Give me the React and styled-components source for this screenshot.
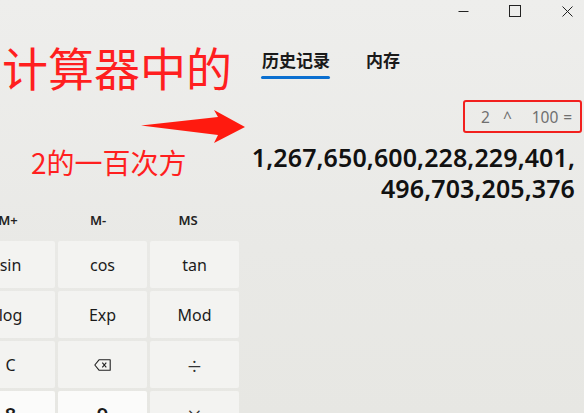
import React from "react";
import styled, { createGlobalStyle } from "styled-components";

const Global = createGlobalStyle`
  html, body { margin: 0; padding: 0; }
  body { font-family: "Noto Sans", "Noto Sans CJK SC", sans-serif; }
`;

const Page = styled.div`
  position: relative;
  width: 584px;
  height: 413px;
  overflow: hidden;
  display: flex;
  flex-direction: column;
  background: linear-gradient(180deg, #eeeeec 0%, #e9e9e6 60%, #e7e7e3 100%);
`;

const TitleBar = styled.div`
  height: 22px;
  display: flex;
  justify-content: flex-end;
  margin-right: -9px;
  flex-shrink: 0;
`;

const WinButton = styled.div`
  width: 52px;
  height: 22px;
  display: flex;
  align-items: center;
  justify-content: center;
  color: #222;
`;

const Body = styled.div`
  flex: 1;
  display: flex;
  min-height: 0;
`;

const CalcPane = styled.div`
  width: 240px;
  flex-shrink: 0;
  padding-top: 183px;
`;

const MemoryRow = styled.div`
  display: grid;
  grid-template-columns: repeat(3, 90px);
  margin-left: -37px;
  height: 30px;
  margin-bottom: 6px;
`;

const MemKey = styled.div`
  display: flex;
  align-items: center;
  justify-content: center;
  font-size: 13px;
  font-weight: 600;
  color: #222;
`;

const KeyGrid = styled.div`
  display: grid;
  grid-template-columns: repeat(3, 89px);
  grid-auto-rows: 47px;
  gap: 3px;
  margin-left: -34px;
`;

const Key = styled.div`
  display: flex;
  align-items: center;
  justify-content: center;
  background: ${(p) => (p.$num ? "#fbfbfa" : "#f3f3f1")};
  border-radius: 2px;
  font-size: ${(p) => (p.$num ? "20px" : p.$big ? "25px" : "16px")};
  font-weight: ${(p) => (p.$num ? 600 : p.$big ? 300 : 400)};
  color: ${(p) => (p.$big ? "#333" : "#1b1b1b")};
`;

const HistoryPane = styled.div`
  flex: 1;
  display: flex;
  flex-direction: column;
`;

const Tabs = styled.div`
  display: flex;
  gap: 36px;
  padding-left: 22px;
  margin-top: 26px;
`;

const Tab = styled.div`
  display: flex;
  flex-direction: column;
  font-family: "Noto Sans CJK SC", sans-serif;
  font-size: 17px;
  font-weight: 700;
  line-height: 24px;
  color: #1a1a1a;
  &::after {
    content: "";
    display: block;
    height: 3px;
    margin-top: 4px;
    margin-left: -1px;
    border-radius: 2px;
    background: ${(p) => (p.$active ? "#0a6fd0" : "transparent")};
  }
`;

const ExprRow = styled.div`
  display: flex;
  justify-content: flex-end;
  padding-right: 2px;
  margin-top: 21px;
`;

const ExprBox = styled.div`
  width: 119px;
  height: 33px;
  box-sizing: border-box;
  border: 2px solid #f2201e;
  border-radius: 3px;
  display: flex;
  align-items: center;
  padding-left: 16px;
  font-size: 15.5px;
  color: #6f6f6f;
`;

const ExprPart = styled.span`
  margin-left: ${(p) => p.$gap || 0}px;
`;

const Result = styled.div`
  margin-top: 9px;
  padding-right: 9px;
  text-align: right;
  font-size: 25px;
  font-weight: 600;
  line-height: 31px;
  color: #111;
  letter-spacing: 0.1px;
`;

const AnnoText = styled.div`
  position: absolute;
  left: ${(p) => p.$x}px;
  top: ${(p) => p.$y}px;
  font-family: "Noto Sans CJK SC", sans-serif;
  font-size: ${(p) => p.$size}px;
  font-weight: 400;
  line-height: 1;
  color: #ff1f1f;
  white-space: nowrap;
`;

const Arrow = styled.svg`
  position: absolute;
  left: 138px;
  top: 106px;
`;

const keys = [
  { t: "sin" }, { t: "cos" }, { t: "tan" },
  { t: "log" }, { t: "Exp" }, { t: "Mod" },
  { t: "C" }, { t: "back" }, { t: "÷", big: true },
  { t: "8", num: true }, { t: "9", num: true }, { t: "×", big: true },
];

const BackIcon = () => (
  <svg width="17" height="12" viewBox="0 0 17 12" fill="none" stroke="#222" strokeWidth="1.1">
    <path d="M5 0.8 H16.2 V11.2 H5 L0.8 6 Z" strokeLinejoin="round" />
    <path d="M8.3 3.6 L12.3 8.4 M12.3 3.6 L8.3 8.4" />
  </svg>
);

export default function App() {
  return (
    <>
      <Global />
      <Page>
        <TitleBar>
          <WinButton>
            <svg width="11" height="11" viewBox="0 0 11 11">
              <path d="M0.5 5.5 H10.5" stroke="#222" strokeWidth="1" />
            </svg>
          </WinButton>
          <WinButton>
            <svg width="12" height="12" viewBox="0 0 12 12">
              <rect x="0.5" y="0.5" width="11" height="11" fill="none" stroke="#222" strokeWidth="1" />
            </svg>
          </WinButton>
          <WinButton>
            <svg width="11" height="11" viewBox="0 0 11 11">
              <path d="M0.5 0.5 L10.5 10.5 M10.5 0.5 L0.5 10.5" stroke="#222" strokeWidth="1" />
            </svg>
          </WinButton>
        </TitleBar>
        <Body>
          <CalcPane>
            <MemoryRow>
              <MemKey>M+</MemKey>
              <MemKey>M-</MemKey>
              <MemKey>MS</MemKey>
            </MemoryRow>
            <KeyGrid>
              {keys.map((k, i) => (
                <Key key={i} $num={k.num} $big={k.big}>
                  {k.t === "back" ? <BackIcon /> : k.t}
                </Key>
              ))}
            </KeyGrid>
          </CalcPane>
          <HistoryPane>
            <Tabs>
              <Tab $active>历史记录</Tab>
              <Tab>内存</Tab>
            </Tabs>
            <ExprRow>
              <ExprBox>
                <ExprPart>2</ExprPart>
                <ExprPart $gap={13}>^</ExprPart>
                <ExprPart $gap={20}>100</ExprPart>
                <ExprPart $gap={5}>=</ExprPart>
              </ExprBox>
            </ExprRow>
            <Result>
              <div>1,267,650,600,228,229,401,</div>
              <div>496,703,205,376</div>
            </Result>
          </HistoryPane>
        </Body>
        <AnnoText $x={2} $y={43} $size={46}>计算器中的</AnnoText>
        <AnnoText $x={31} $y={148} $size={28}>2的一百次方</AnnoText>
        <Arrow width="110" height="40" viewBox="0 0 110 40">
          <polygon points="3,19.5 80,11 76,4 107,21 76,37 80,29" fill="#ff1a0f" />
        </Arrow>
      </Page>
    </>
  );
}
